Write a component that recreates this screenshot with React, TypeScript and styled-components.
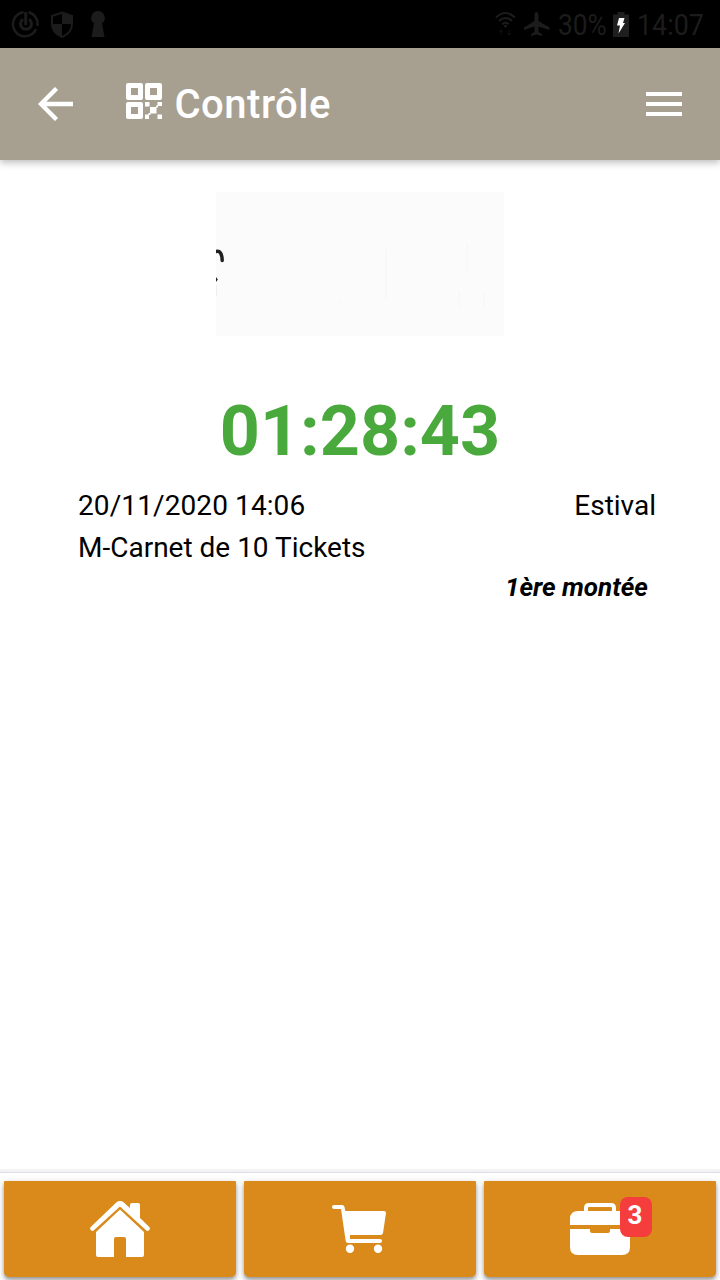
import React from "react";
import styled, { createGlobalStyle } from "styled-components";

const GlobalStyle = createGlobalStyle`
  * { box-sizing: border-box; }
  body { margin: 0; background: #fff; font-family: Roboto, "Noto Sans", sans-serif; color: #000; }
  svg { display: block; flex: none; }
`;

const Screen = styled.div`
  width: 720px;
  height: 1280px;
  display: flex;
  flex-direction: column;
  overflow: hidden;
`;

const StatusBar = styled.div`
  height: 48px;
  flex: none;
  display: flex;
  justify-content: space-between;
  background: #000;
  color: #1c1c1c;
`;

const StatusGroup = styled.div`
  display: flex;
`;

const StatusText = styled.div<{ $width: number; $scale: number }>`
  width: ${(p) => p.$width}px;
  margin: 0 0 0 8px;
  font-size: 29.500px;
  line-height: 50px;
  white-space: nowrap;
  transform: scaleX(${(p) => p.$scale});
  transform-origin: left;
`;

const Header = styled.header`
  height: 112px;
  flex: none;
  display: flex;
  align-items: center;
  padding: 0 38px;
  background: #a7a091;
  color: #fff;
  box-shadow: 0 3px 7px rgba(0, 0, 0, 0.25);
`;

const Title = styled.h1`
  flex: 1;
  display: flex;
  align-items: center;
  gap: 12.500px;
  margin: 2px 0 0 53px;
  font-size: 40px;
  font-weight: 500;
  line-height: 48px;
  letter-spacing: 0.5px;
`;

const TitleIcon = styled.span`
  margin-top: -8px;
`;

const Content = styled.main`
  flex: 1;
  padding: 32px 64px 0 78px;
`;

const Banner = styled.div`
  width: 288px;
  height: 144px;
  margin-left: 138px;
  background: #fbfbfb;
`;

const Timer = styled.div`
  margin: 54px 0 13px -14px;
  text-align: center;
  font-size: 70px;
  font-weight: 700;
  line-height: 82px;
  color: #49a93c;
`;

const InfoRow = styled.div`
  display: flex;
  justify-content: space-between;
  font-size: 28px;
  line-height: 42px;
`;

const DateText = styled.span`
  letter-spacing: 0.1px;
`;

const Ride = styled.div`
  padding-right: 8px;
  text-align: right;
  font-size: 26px;
  font-weight: 700;
  font-style: italic;
  line-height: 36px;
`;

const Footer = styled.footer`
  height: 108px;
  flex: none;
  display: flex;
  gap: 8px;
  padding: 8px 4px 3px;
  border-top: 1px solid #e0dbe5;
  box-shadow: 0 -3px 0 #f3f2f5;
  background: #fff;
`;

const TabButton = styled.button`
  flex: 1;
  display: flex;
  align-items: center;
  justify-content: center;
  padding: 0;
  border: 0;
  border-radius: 1px 1px 5px 5px;
  background: #d98a1b;
  box-shadow: 0 3px 4px rgba(0, 0, 0, 0.36), 0 1px 8px rgba(0, 0, 0, 0.1);
`;

const BagWrap = styled.span`
  position: relative;
`;

const Badge = styled.span`
  position: absolute;
  left: 50px;
  top: -6px;
  width: 32px;
  height: 40px;
  border-radius: 8px;
  background: #f53d3d;
  color: #fff;
  font: 700 26px/37px Roboto, sans-serif;
  text-align: center;
  padding-right: 2px;
`;

const NotificationIcons = () => (
  <svg width="120" height="48" viewBox="0 0 120 48" fill="none" stroke="currentColor">
    <path d="M23.500 12.300A12 12 0 1 0 36 29M37.500 26A12 12 0 0 0 28.500 12.300" strokeWidth="2.500" />
    <path d="M23 19.200a5.500 5.500 0 1 0 6 0M25.700 12v13" strokeWidth="3" />
    <path d="M62 12.500L72 16v8c0 6-4 10.500-10 13c-6-2.500-10-7-10-13v-8Z" strokeWidth="2" />
    <path d="M62 12.500L72 16v8H62ZM62 24v13c-6-2.500-10-7-10-13Z" fill="currentColor" stroke="none" />
    <path d="M98 11a6.800 6.800 0 0 1 4 12.300L104.500 37h-13L94 23.300A6.800 6.800 0 0 1 98 11Z" fill="currentColor" stroke="none" />
  </svg>
);

const SignalIcons = () => (
  <svg width="55" height="48" viewBox="495 0 55 48" fill="none" stroke="currentColor">
    <path d="M496 17.500q9.500-9 19 0M499 21q6.500-6 13 0M502.200 24.200q3.300-3 6.600 0" strokeWidth="2" />
    <circle cx="505.500" cy="26" r="1.500" fill="currentColor" stroke="none" />
    <path d="M501 30v5M499.500 32l1.500-2l1.500 2M509 30v5M507.500 33l1.500 2l1.500-2" strokeWidth="1" opacity=".6" />
    <path d="M536.500 12c1.300 0 2 1.500 2 3v6l11 6.500v2.500l-11-3.500v5.500l3.500 2.300V36l-5.500-1.500l-5.500 1.500v-1.700l3.500-2.300v-5.500l-10.500 3.500v-2.500l10.500-6.500v-6c0-1.500.7-3 2-3Z" fill="currentColor" stroke="none" />
  </svg>
);

const BatteryIcon = () => (
  <svg width="16" height="48" viewBox="613 0 16 48">
    <path d="M617.500 12h7v2.500h4.500V37h-16V14.500h4.500Z" fill="#1f1f1f" />
    <path d="M619 18h5.500l-1.500 5h2l-6.500 10.500l1.500-8h-3Z" fill="#fff" />
  </svg>
);

const BackIcon = () => (
  <svg width="35" height="34" viewBox="0 0 35 34" fill="none" stroke="#fff" strokeWidth="4.400">
    <path d="M18.500 1.500L3 17L18.500 32.500M3 17H35" />
  </svg>
);

const QrIcon = () => (
  <svg width="36" height="36" viewBox="0 0 36 36" fill="#fff">
    <path fillRule="evenodd" d="M2 0h13q2 0 2 2v13q0 2-2 2H2q-2 0-2-2V2q0-2 2-2ZM5 5v7h7V5ZM21 0h13q2 0 2 2v13q0 2-2 2H21q-2 0-2-2V2q0-2 2-2ZM24 5v7h7V5ZM2 19h13q2 0 2 2v13q0 2-2 2H2q-2 0-2-2V21q0-2 2-2ZM5 24v7h7v-7Z" />
    <path d="M19 19h4.500v4.500H19ZM31.500 19H36v4h-4.500ZM24 24h6.500v6.500H24ZM19 31.500h4V36h-4ZM31.500 31.500H36V36h-4.500ZM30 22.500h2v2h-2ZM22.500 30h2v2h-2Z" />
  </svg>
);

const MenuIcon = () => (
  <svg width="36" height="24" viewBox="0 0 36 24" fill="#fff">
    <path d="M0 0h36v4H0ZM0 10h36v4H0ZM0 20h36v4H0Z" />
  </svg>
);

const BannerFragment = () => (
  <svg width="288" height="144" viewBox="0 0 288 144">
    <path d="M0 59.500c4-1 6 2 6.200 9" fill="none" stroke="#202020" strokeWidth="3.500" strokeLinecap="round" />
    <path d="M0 85l1.800 2.500L0 90Z" fill="#202020" />
    <path d="M.5 93v11" stroke="#eeeeee" />
    <path d="M170 57v50M123 109v5M251 52v30M243 100v15M268 100v14" stroke="#f8f8f8" strokeWidth="2" />
  </svg>
);

const HomeIcon = () => (
  <svg width="60" height="56" viewBox="0 0 60 56" fill="#fff">
    <path d="M30 8.500L54 31v23q0 2-2 2H36V38q0-2-2-2h-8q-2 0-2 2v18H8q-2 0-2-2V31Z" />
    <path d="M30 0q2 0 3.500 1.300L40 7V4q0-2 2-2h6q2 0 2 2v13l9.300 9q1.200 1.500 0 3q-1.500 1.500-3 .5L30 5.500L3.700 29.500q-1.500 1-3-.5q-1.200-1.500 0-3L26.500 1.300Q28 0 30 0Z" />
  </svg>
);

const CartIcon = () => (
  <svg width="56" height="48" viewBox="0 0 56 48" fill="#fff">
    <path d="M2 0h8q2 0 2.500 2l.8 4H52q2 0 2 2l-3 20q-.4 2-2.500 2H18v4h30q2 0 2 2t-2 2H16q-2 0-2.300-2L9 4H2Q0 4 0 2t2-2Z" />
    <circle cx="18" cy="43.800" r="4.200" />
    <circle cx="46" cy="43.800" r="4.200" />
  </svg>
);

const BagIcon = () => (
  <svg width="60" height="52" viewBox="0 0 60 52" fill="#fff">
    <path fillRule="evenodd" d="M19 0h22q5 0 5 5v3h6q8 0 8 8v6H0v-6q0-8 8-8h6V5q0-5 5-5ZM19 4q-1 0-1 1v3h24V5q0-1-1-1Z" />
    <path d="M0 26h20v2q0 2 2 2h16q2 0 2-2v-2h20v18q0 8-8 8H8q-8 0-8-8Z" />
  </svg>
);

export default function App() {
  return (
    <>
      <GlobalStyle />
      <Screen>
        <StatusBar>
          <NotificationIcons />
          <StatusGroup>
            <SignalIcons />
            <StatusText $width={55} $scale={0.89}>30%</StatusText>
            <BatteryIcon />
            <StatusText $width={83} $scale={0.91}>14:07</StatusText>
          </StatusGroup>
        </StatusBar>
        <Header>
          <BackIcon />
          <Title>
            <TitleIcon><QrIcon /></TitleIcon>
            Contrôle
          </Title>
          <MenuIcon />
        </Header>
        <Content>
          <Banner><BannerFragment /></Banner>
          <Timer>01:28:43</Timer>
          <InfoRow><DateText>20/11/2020 14:06</DateText><span>Estival</span></InfoRow>
          <InfoRow><span>M-Carnet de 10 Tickets</span></InfoRow>
          <Ride>1ère montée</Ride>
        </Content>
        <Footer>
          <TabButton aria-label="Accueil"><HomeIcon /></TabButton>
          <TabButton aria-label="Panier"><CartIcon /></TabButton>
          <TabButton aria-label="Mes titres">
            <BagWrap>
              <BagIcon />
              <Badge>3</Badge>
            </BagWrap>
          </TabButton>
        </Footer>
      </Screen>
    </>
  );
}
